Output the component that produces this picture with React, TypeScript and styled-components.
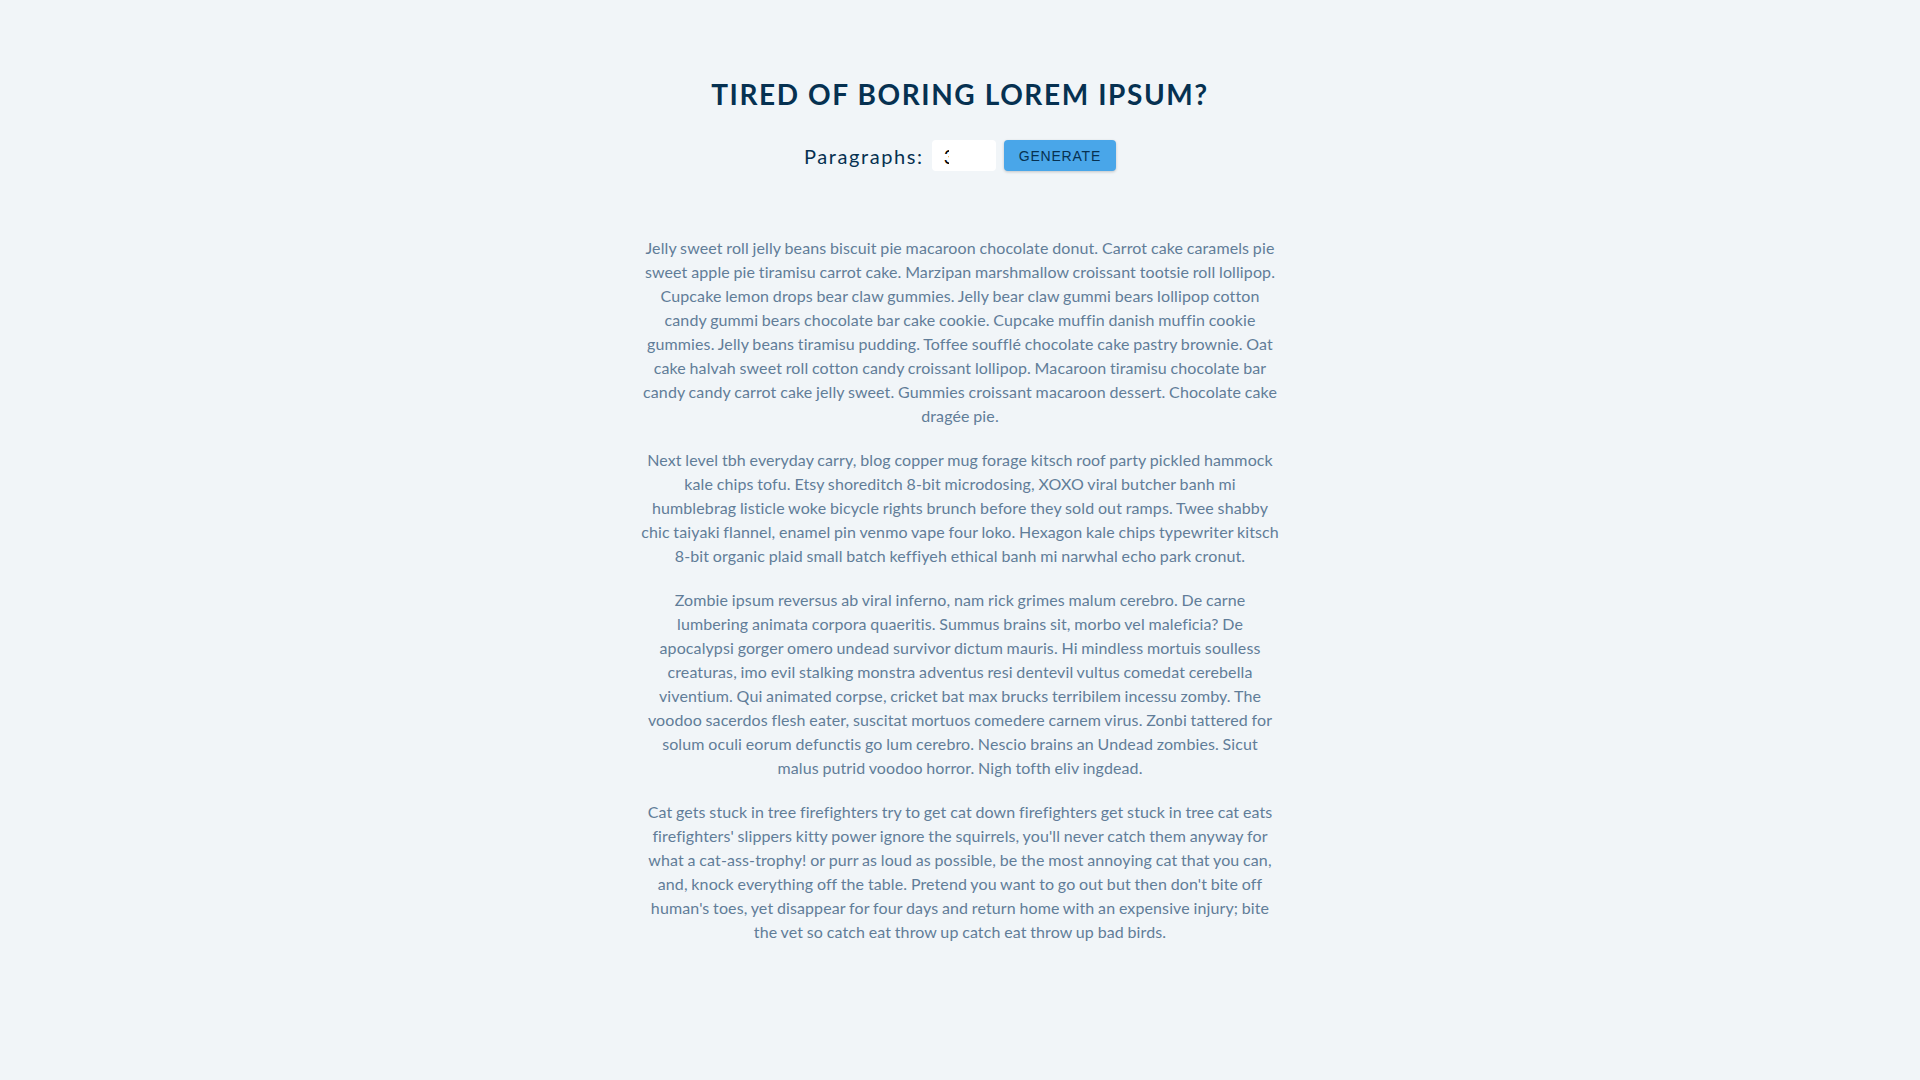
import React, { Fragment, useState } from "react";
import styled, { createGlobalStyle } from "styled-components";

const Global = createGlobalStyle`
  * { box-sizing: border-box; margin: 0; padding: 0; }
  body {
    background: #f1f5f8;
    color: #063151;
    font-family: "Segoe UI", Lato, "Open Sans", sans-serif;
    font-size: 16px;
    line-height: 1.5;
  }
`;

const Section = styled.section`
  width: 90vw;
  max-width: 640px;
  margin: 80px auto 0;
  text-align: center;
`;

const Title = styled.h3`
  font-size: 28px;
  font-weight: 700;
  line-height: 1;
  letter-spacing: 1.6px;
  text-transform: uppercase;
  color: #063151;
  margin-bottom: 12px;
`;

const Form = styled.form`
  display: flex;
  justify-content: center;
  align-items: center;
  margin-top: 32px;
  margin-bottom: 65px;
  letter-spacing: 1.6px;
  text-transform: capitalize;
`;

const Label = styled.label`
  font-size: 20px;
  line-height: 30px;
  color: #063151;
`;

const AmountInput = styled.input`
  width: 64px;
  height: 31px;
  margin: 0 8px;
  padding: 4px 47px 4px 12px;
  border: none;
  border-radius: 4px;
  background: #ffffff;
  font-family: "Segoe UI", Lato, sans-serif;
  font-size: 20px;
  color: #000;
  outline: none;
`;

const Button = styled.button`
  height: 31px;
  padding: 0 13px;
  border: 2px solid transparent;
  border-radius: 4px;
  background: #49a6e9;
  color: #063151;
  font-family: "Liberation Sans", Arial, sans-serif;
  font-size: 14px;
  letter-spacing: 0.8px;
  text-transform: uppercase;
  box-shadow: 0 1px 3px rgba(0, 0, 0, 0.2);
  cursor: pointer;
`;

const Result = styled.article``;

const Paragraph = styled.p`
  color: #617d98;
  letter-spacing: 0.109375px;
  word-spacing: -0.5px;
  margin-bottom: 20px;
`;

// Each paragraph is a list of text runs; a new run starts on a new line.
const paragraphs: string[][] = [
  [
    "Jelly sweet roll jelly beans biscuit pie macaroon chocolate donut. Carrot cake caramels pie sweet apple pie tiramisu carrot cake. Marzipan marshmallow croissant tootsie roll lollipop. Cupcake lemon drops bear claw gummies. Jelly bear claw gummi bears lollipop cotton candy gummi bears chocolate bar cake cookie. Cupcake muffin danish muffin cookie gummies. Jelly beans tiramisu pudding. Toffee soufflé chocolate cake pastry brownie. Oat cake halvah sweet roll cotton candy croissant lollipop. Macaroon tiramisu chocolate bar candy candy carrot cake jelly sweet. Gummies croissant macaroon dessert. Chocolate cake dragée pie.",
  ],
  [
    "Next level tbh everyday carry, blog copper mug forage kitsch roof party pickled hammock kale chips tofu. Etsy shoreditch 8-bit microdosing, XOXO viral butcher banh mi",
    "humblebrag listicle woke bicycle rights brunch before they sold out ramps. Twee shabby chic taiyaki flannel, enamel pin venmo vape four loko. Hexagon kale chips typewriter kitsch 8-bit organic plaid small batch keffiyeh ethical banh mi narwhal echo park cronut.",
  ],
  [
    "Zombie ipsum reversus ab viral inferno, nam rick grimes malum cerebro. De carne lumbering animata corpora quaeritis. Summus brains sit, morbo vel maleficia? De apocalypsi gorger omero undead survivor dictum mauris. Hi mindless mortuis soulless creaturas, imo evil stalking monstra adventus resi dentevil vultus comedat cerebella viventium. Qui animated corpse, cricket bat max brucks terribilem incessu zomby. The voodoo sacerdos flesh eater, suscitat mortuos comedere carnem virus. Zonbi tattered for solum oculi eorum defunctis go lum cerebro. Nescio brains an Undead zombies. Sicut malus putrid voodoo horror. Nigh tofth eliv ingdead.",
  ],
  [
    "Cat gets stuck in tree firefighters try to get cat down firefighters get stuck in tree cat eats firefighters' slippers kitty power ignore the squirrels, you'll never catch them anyway for what a cat-ass-trophy! or purr as loud as possible, be the most annoying cat that you can, and, knock everything off the table. Pretend you want to go out but then don't bite off human's toes, yet disappear for four days and return home with an expensive injury; bite the vet so catch eat throw up catch eat throw up bad birds.",
  ],
];

export default function App() {
  const [count, setCount] = useState("3");
  return (
    <>
      <Global />
      <Section>
        <Title>tired of boring lorem ipsum?</Title>
        <Form onSubmit={(e) => e.preventDefault()}>
          <Label htmlFor="amount">paragraphs:</Label>
          <AmountInput
            type="text"
            id="amount"
            name="amount"
            value={count}
            onChange={(e) => setCount(e.target.value)}
          />
          <Button type="submit">generate</Button>
        </Form>
        <Result>
          {paragraphs.map((runs, i) => (
            <Paragraph key={i}>
              {runs.map((run, j) => (
                <Fragment key={j}>
                  {j > 0 && <br />}
                  {run}
                </Fragment>
              ))}
            </Paragraph>
          ))}
        </Result>
      </Section>
    </>
  );
}
